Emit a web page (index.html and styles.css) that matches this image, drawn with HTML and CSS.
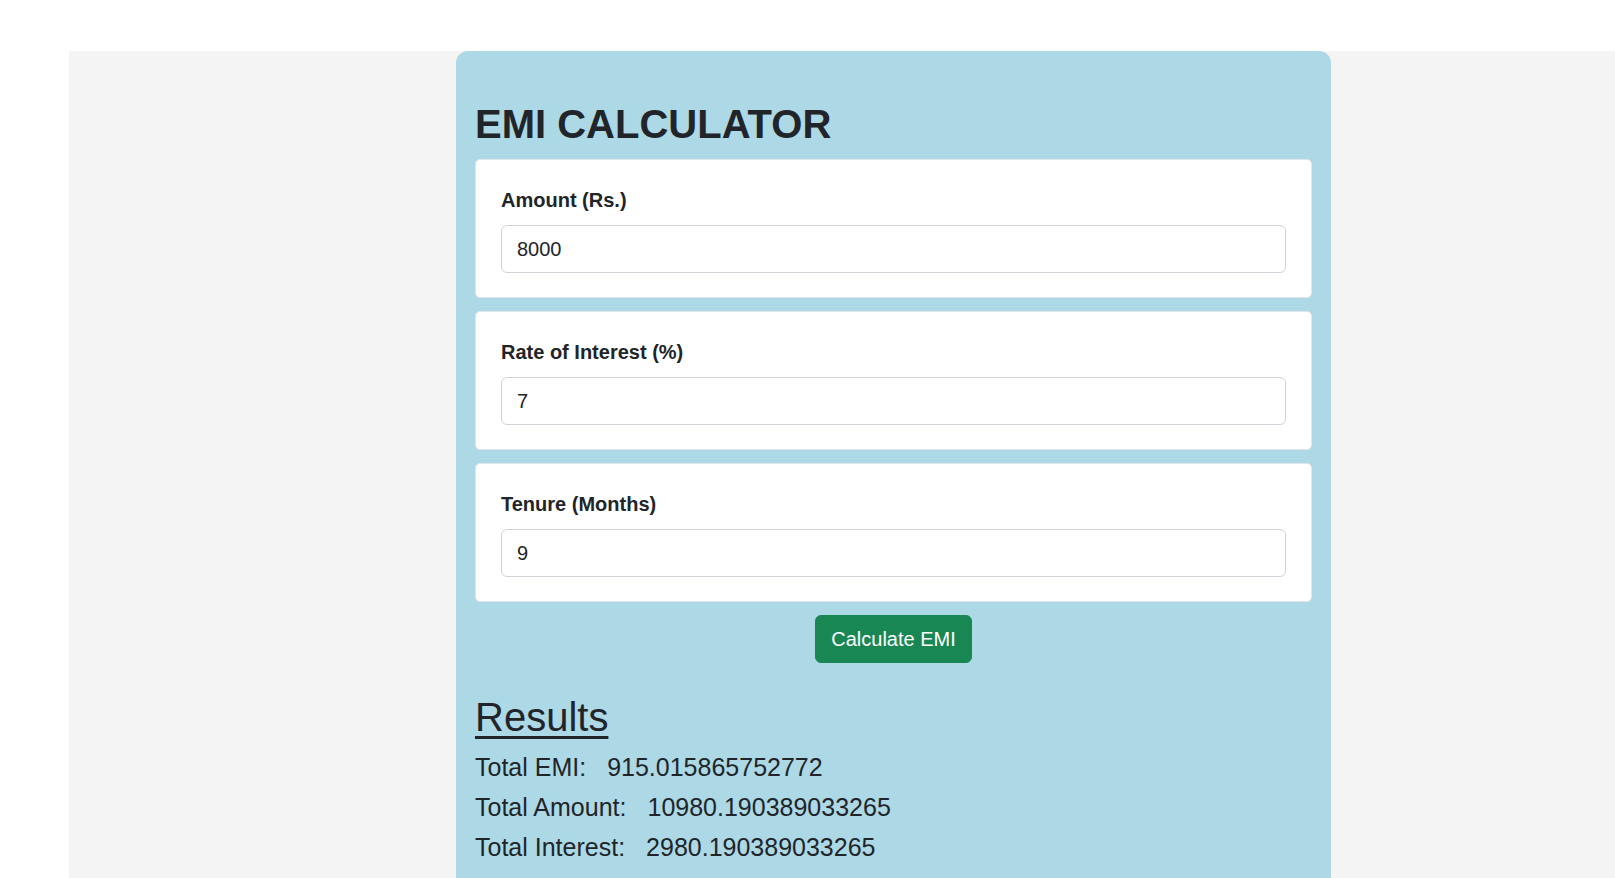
FILE: index.html
```html
<!DOCTYPE html>
<html lang="en">
<head>
<meta charset="utf-8">
<title>EMI Calculator</title>
<link rel="stylesheet" href="styles.css">
</head>
<body>
<div class="page">
  <div class="calc">
    <h1 class="title">EMI CALCULATOR</h1>
    <div class="field-card">
      <label class="field-label" for="amount">Amount (Rs.)</label>
      <input class="field-input" id="amount" type="text" value="8000">
    </div>
    <div class="field-card">
      <label class="field-label" for="rate">Rate of Interest (%)</label>
      <input class="field-input" id="rate" type="text" value="7">
    </div>
    <div class="field-card">
      <label class="field-label" for="tenure">Tenure (Months)</label>
      <input class="field-input" id="tenure" type="text" value="9">
    </div>
    <div class="actions">
      <button class="btn-calc" type="button">Calculate EMI</button>
    </div>
    <h2 class="results-title">Results</h2>
    <div class="results">
      <p class="result-line"><span>Total EMI:</span><span class="result-value">915.015865752772</span></p>
      <p class="result-line"><span>Total Amount:</span><span class="result-value">10980.190389033265</span></p>
      <p class="result-line"><span>Total Interest:</span><span class="result-value">2980.190389033265</span></p>
    </div>
  </div>
</div>
</body>
</html>
```
FILE: styles.css
```css
html, body {
  margin: 0;
  padding: 0;
  background: #ffffff;
  overflow: hidden;
}

body {
  font-family: "Liberation Sans", Arial, Helvetica, sans-serif;
  color: #212529;
}

.page {
  margin-top: 51px;
  margin-left: 69px;
  padding-left: 387px;
  background: #f4f4f4;
  min-height: 900px;
}

.calc {
  width: 837px;
  background: #add8e6;
  border-radius: 12px;
  padding: 49px 19px 60px 19px;
}

.title {
  margin: 0 0 11px 0;
  font-size: 40px;
  line-height: 48px;
  font-weight: 700;
  color: #212529;
}

.field-card {
  background: #ffffff;
  border: 1px solid #e3e6e8;
  border-radius: 5px;
  padding: 25px 25px 24px 25px;
  margin-bottom: 13px;
  display: flex;
  flex-direction: column;
  gap: 10px;
}

.field-label {
  font-size: 20px;
  line-height: 30px;
  font-weight: 700;
  color: #212529;
}

.field-input {
  box-sizing: border-box;
  height: 48px;
  width: 100%;
  border: 1px solid #ced4da;
  border-radius: 6px;
  padding: 0 15px;
  font-family: "Liberation Sans", Arial, sans-serif;
  font-size: 20px;
  color: #212529;
  background: #ffffff;
  outline: none;
}

.actions {
  display: flex;
  justify-content: center;
}

.btn-calc {
  height: 48px;
  padding: 0 15px;
  border: 1px solid #198754;
  border-radius: 6px;
  background: #198754;
  color: #ffffff;
  font-family: "Liberation Sans", Arial, sans-serif;
  font-size: 20px;
  line-height: 30px;
  cursor: pointer;
}

.results-title {
  margin: 30px 0 6px 0;
  font-size: 40px;
  line-height: 48px;
  font-weight: 400;
  text-decoration: underline;
  text-decoration-thickness: 3px;
  text-underline-offset: 5px;
  color: #212529;
}

.results {
  display: flex;
  flex-direction: column;
}

.result-line {
  margin: 0;
  font-size: 25px;
  line-height: 40px;
  color: #212529;
}

.result-value {
  margin-left: 21px;
}
```
